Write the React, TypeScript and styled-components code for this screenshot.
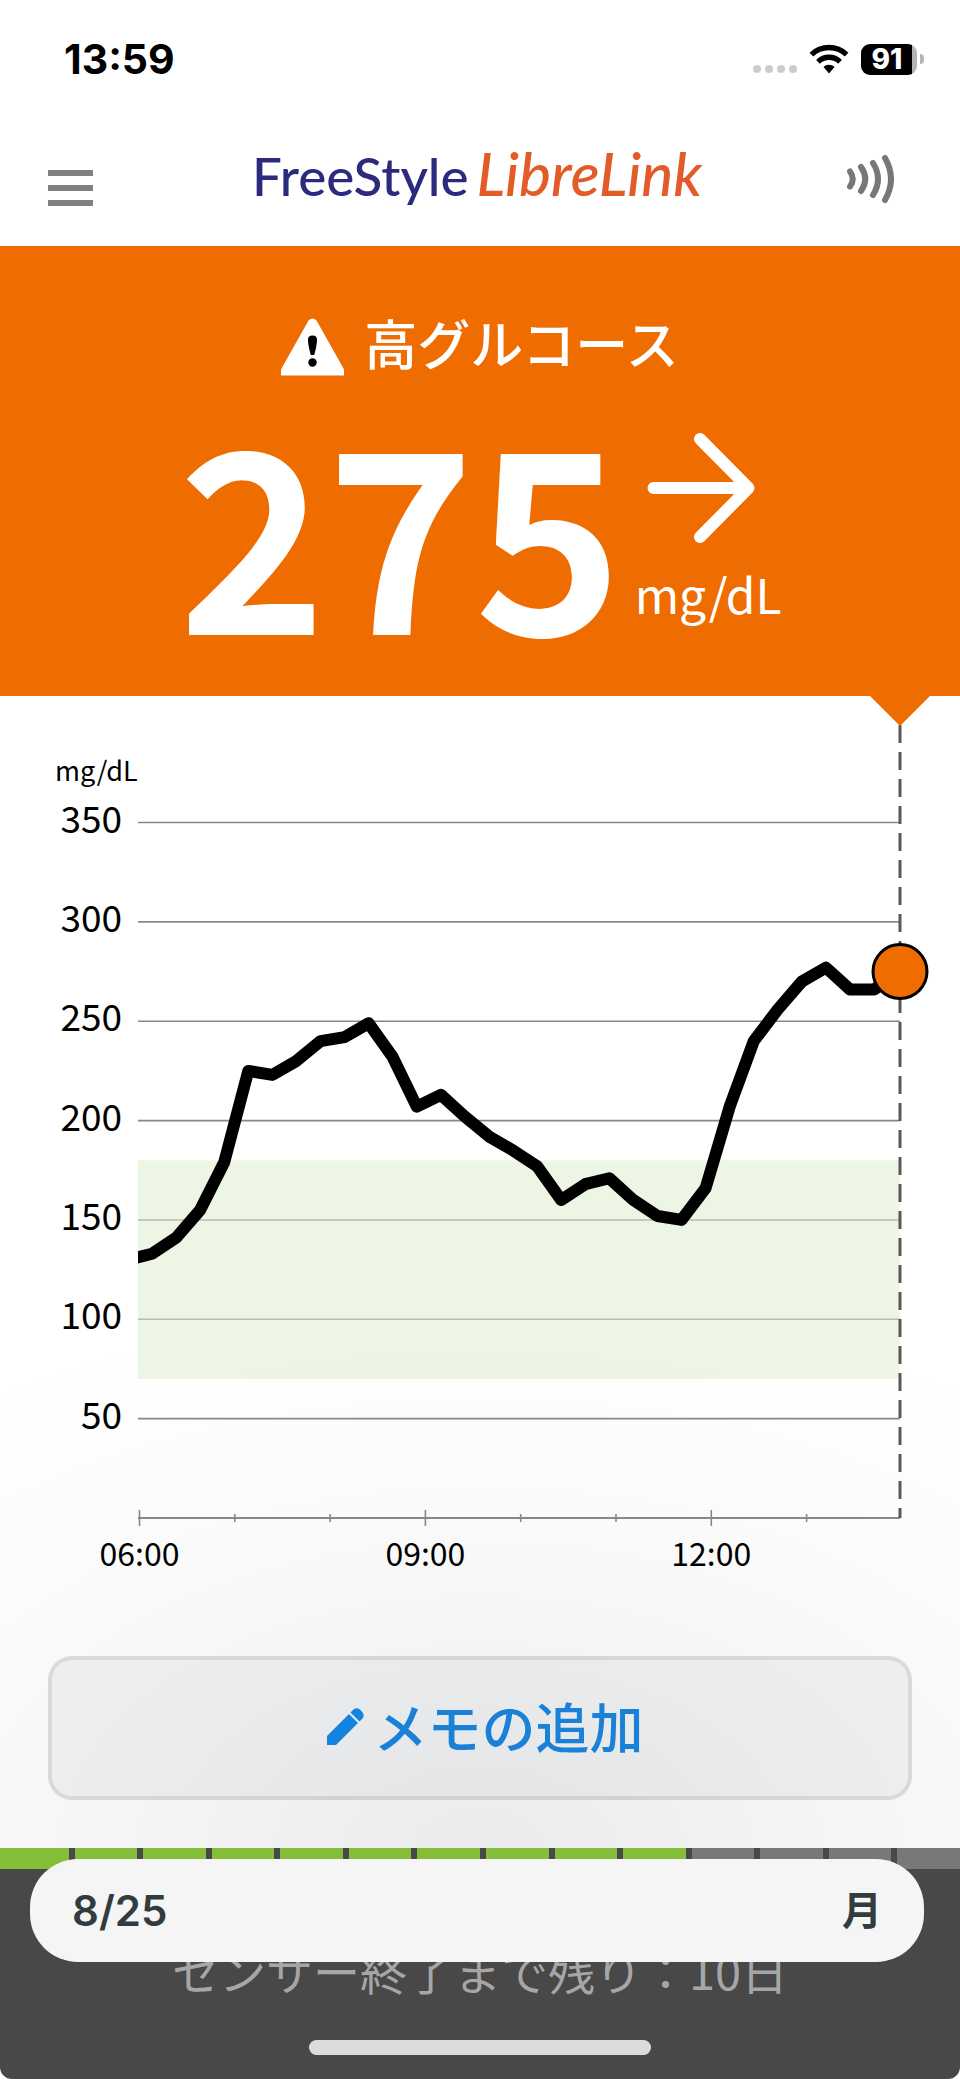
import React from "react";
import styled, { createGlobalStyle } from "styled-components";

const orange = "#ef6c00";
const cjk = '"Noto Sans CJK JP", "Noto Sans", sans-serif';
const inter = 'Inter, "Noto Sans CJK JP", sans-serif';

const GlobalStyle = createGlobalStyle`
  *, *::before, *::after { box-sizing: border-box; }
  body { margin: 0; background: #fff; color: #000; font-family: ${cjk}; }
  button { font: inherit; margin: 0; padding: 0; border: 0; background: none; cursor: pointer; }
`;

const Screen = styled.div`
  display: flex;
  flex-direction: column;
  min-height: 100vh;
`;

const StatusBar = styled.div`
  display: flex;
  align-items: center;
  justify-content: space-between;
  height: 118px;
  padding: 0 36px 0 64px;
  font-family: ${inter};
`;

const Clock = styled.time`
  font-size: 41px;
  font-weight: 700;
  line-height: 48px;
`;

const StatusIcons = styled.div`
  display: flex;
  align-items: center;
  gap: 12px;
`;

const Battery = styled.div`
  display: flex;
  align-items: center;
  gap: 3px;
`;

const BatteryBody = styled.div`
  display: flex;
  align-items: center;
  justify-content: center;
  width: 56px;
  height: 31px;
  padding-right: 4px;
  border-radius: 9px;
  background: linear-gradient(to right, #000 51px, #b4b4b4 51px);
  color: #fff;
  font-size: 28px;
  font-weight: 800;
  line-height: 31px;
`;

const BatteryTip = styled.div`
  width: 4px;
  height: 10px;
  border-radius: 0 5px 5px 0;
  background: #b4b4b4;
`;

const Header = styled.header`
  display: flex;
  align-items: center;
  justify-content: space-between;
  height: 128px;
  padding: 0 66px 0 48px;
`;

const MenuButton = styled.button`
  display: flex;
  flex-direction: column;
  gap: 9px;
  width: 45px;
  padding-top: 12px;
`;

const MenuLine = styled.span`
  height: 6px;
  background: #808080;
`;

const Logo = styled.h1`
  display: flex;
  align-items: baseline;
  gap: 8px;
  margin: 0;
  padding: 0 0 16px 16px;
  font-family: Lato, sans-serif;
  font-weight: 500;
  line-height: 72px;
`;

const LogoFree = styled.span`
  color: #2b2a7c;
  font-size: 53px;
`;

const LogoLibre = styled.span`
  color: #e35b28;
  font-size: 60px;
  font-style: italic;
`;

const ScanButton = styled.button`
  display: flex;
  padding-bottom: 6px;
`;

const Reading = styled.section`
  display: flex;
  flex-direction: column;
  align-items: center;
  gap: 50px;
  padding: 62px 48px 70px;
  background: ${orange};
  color: #fff;
`;

const AlertTitle = styled.h2`
  display: flex;
  align-items: center;
  gap: 20px;
  margin: 0;
  font-size: 53px;
  font-weight: 500;
  line-height: 60px;

  svg {
    margin-top: 10px;
  }
`;

const ReadingRow = styled.div`
  display: flex;
  justify-content: center;
  gap: 12px;
  height: 200px;
`;

const Value = styled.strong`
  font-size: 251px;
  font-weight: 700;
  line-height: 200px;
`;

const Trend = styled.div`
  display: flex;
  flex-direction: column;
  gap: 22px;
  padding-top: 7px;

  svg {
    margin-left: 12px;
  }
`;

const Unit = styled.span`
  font-size: 48px;
  line-height: 56px;
`;

const Body = styled.main`
  display: flex;
  flex: 1;
  flex-direction: column;
  background: radial-gradient(ellipse 900px 540px at 50% 100%, #ebebeb, #f6f6f6 42%, #fbfbfb 67%, #fff);
`;

const ChartSvg = styled.svg`
  display: block;
  width: 100%;
  height: auto;
  font-family: ${cjk};
`;

const NoteButton = styled.button`
  display: flex;
  align-items: center;
  justify-content: center;
  gap: 10px;
  height: 144px;
  margin: 40px 48px 48px;
  padding: 0 0 4px 10px;
  border: 4px solid rgba(0, 0, 0, 0.12);
  border-radius: 24px;
  background: rgba(200, 208, 212, 0.25);
  background-clip: padding-box;
  color: #1a80d8;
  font-size: 54px;
  font-weight: 500;
  line-height: 60px;
`;

const Footer = styled.footer`
  position: relative;
  overflow: hidden;
  border-radius: 0 0 12px 12px;
  background: #484848;
`;

const Segments = styled.div`
  display: grid;
  grid-template-columns: repeat(14, 1fr);
  height: 21px;
`;

const Segment = styled.span<{ $left: boolean }>`
  background: ${(p) => (p.$left ? "#84bd38" : "#787878")};

  & + & {
    border-left: 6px solid #484848;
  }
`;

const SensorText = styled.p`
  margin: 0;
  padding-top: 73px;
  color: #a6a6a6;
  font-size: 47px;
  font-weight: 400;
  line-height: 56px;
  text-align: center;
  white-space: nowrap;
`;

const HomeIndicator = styled.div`
  width: 342px;
  height: 15px;
  margin: 42px auto 24px;
  border-radius: 8px;
  background: #dcdcdc;
`;

const DatePill = styled.div`
  position: absolute;
  top: 11px;
  left: 30px;
  right: 36px;
  display: flex;
  align-items: center;
  justify-content: space-between;
  height: 103px;
  padding: 0 42px;
  border-radius: 48px;
  background: #f5f5f5;
  color: #323c3e;
  font-family: ${inter};
  font-size: 42px;
  font-weight: 600;
  line-height: 48px;
`;

const Weekday = styled.span`
  font-size: 40px;
`;

/* Chart geometry, in view-box units */
const LEFT = 138;
const RIGHT = 900;
const ZERO = 822;
const HOUR = 95.3;
const SIX = 139.5;
const yOf = (v: number) => ZERO - v * 1.987;

const levels = [350, 300, 250, 200, 150, 100, 50];
const hours = [0, 1, 2, 3, 4, 5, 6, 7];
const readings = [
  133, 141, 155, 179, 225, 223, 230, 240, 242, 249, 232, 207, 213, 202, 192, 185,
  177, 160, 168, 171, 160, 152, 150, 166, 207, 240, 256, 270, 277, 266, 266,
];

const curve = [
  `${LEFT - 10},${yOf(130)}`,
  ...readings.map((v, i) => `${152 + i * 24.07},${yOf(v)}`),
  `${RIGHT},${yOf(275)}`,
].join(" ");

function GlucoseChart() {
  return (
    <ChartSvg viewBox="0 0 960 920" role="img" aria-label="グルコース値のグラフ">
      <clipPath id="plot">
        <rect x={LEFT} y="0" width={RIGHT - LEFT} height={ZERO} />
      </clipPath>
      {levels.map((v) => (
        <line key={v} x1={LEFT} x2={RIGHT} y1={yOf(v)} y2={yOf(v)} stroke="#888" strokeWidth="1.6" />
      ))}
      <rect x={LEFT} y={yOf(180)} width={RIGHT - LEFT} height={yOf(70) - yOf(180)} fill="rgba(221, 236, 204, 0.53)" />
      <line x1={LEFT} x2={RIGHT} y1={ZERO} y2={ZERO} stroke="#888" strokeWidth="2" />
      {hours.map((h) => {
        const half = h % 3 === 0 ? 8 : 4;
        const x = SIX + h * HOUR;
        return <line key={h} x1={x} x2={x} y1={ZERO - half} y2={ZERO + half} stroke="#888" strokeWidth="1.6" />;
      })}
      <line x1={RIGHT} x2={RIGHT} y1="29" y2={ZERO} stroke="#595959" strokeWidth="3" strokeDasharray="18 9" />
      <polyline points={curve} fill="none" stroke="#000" strokeWidth="12" strokeLinejoin="round" clipPath="url(#plot)" />
      <circle cx={RIGHT} cy={yOf(275)} r="27" fill={orange} stroke="#000" strokeWidth="3" />
      <polygon points="870,0 930,0 900,30" fill={orange} />
      <text x="55" y="85" fontSize="27">mg/dL</text>
      {levels.map((v) => (
        <text key={v} x="122" y={yOf(v) + 10} fontSize="37" textAnchor="end">{v}</text>
      ))}
      {["06:00", "09:00", "12:00"].map((t, i) => (
        <text key={t} x={SIX + i * 3 * HOUR} y="870" fontSize="32" textAnchor="middle">{t}</text>
      ))}
    </ChartSvg>
  );
}

const SignalDots = () => (
  <svg width="44" height="31" viewBox="0 0 44 31" fill="#ccc" aria-hidden="true">
    {[4, 16, 28, 40].map((x) => <circle key={x} cx={x} cy="25" r="4" />)}
  </svg>
);

const Wifi = () => (
  <svg width="40" height="31" viewBox="0 0 40 31" aria-hidden="true">
    <g fill="none" stroke="#000" strokeWidth="5.4">
      <path d="M2.4 10.6a25.500 25.500 0 0 1 35.200 0" />
      <path d="M9 17.800a15.600 15.600 0 0 1 22 0" />
    </g>
    <path d="M20 20.800c2.100 0 4 .8 5.500 2.100L20 29.400l-5.500-6.500c1.500-1.300 3.400-2.100 5.500-2.100z" />
  </svg>
);

const Waves = () => (
  <svg width="49" height="50" viewBox="0 0 49 50" fill="none" stroke="#777" strokeWidth="6" strokeLinecap="round" aria-hidden="true">
    <path d="M5 17.500q5.500 7.500 0 15" />
    <path d="M16 13q8.500 12 0 24" />
    <path d="M28 9q10 16 0 32" />
    <path d="M40 4q12 21 0 42" />
  </svg>
);

const Warning = () => (
  <svg width="63" height="58" viewBox="0 0 63 58" aria-hidden="true">
    <path d="M27.500 2.400Q31.500-1.600 35.500 2.400L62.500 50.500Q63 51.500 63 53V57.500H0V53Q0 51.500.5 50.500z" fill="#fff" />
    <path d="M27 21.500q0-4 4.500-4t4.500 4q0 6-2.800 15.500h-3.400Q27 27.500 27 21.500z" fill="#000" />
    <circle cx="31.500" cy="44.500" r="4.200" fill="#000" />
  </svg>
);

const TrendArrow = () => (
  <svg width="108" height="110" viewBox="0 0 108 110" fill="none" stroke="#fff" strokeWidth="12" strokeLinecap="round" strokeLinejoin="round" aria-label="横ばい" role="img">
    <path d="M6.500 55H101M53 6l48.500 49L53 104" />
  </svg>
);

const Pencil = () => (
  <svg width="37" height="37" viewBox="0 0 37 37" fill="#1484e0" aria-hidden="true">
    <path d="M0 28L22 6L31 15L9 37H0z" />
    <path d="M23.500 4.500L26.500 1.500Q30-1.200 34 2.500Q38.500 7 35.500 10.500L32.500 13.500z" />
  </svg>
);

export default function App() {
  return (
    <Screen>
      <GlobalStyle />
      <StatusBar>
        <Clock>13:59</Clock>
        <StatusIcons>
          <SignalDots />
          <Wifi />
          <Battery>
            <BatteryBody>91</BatteryBody>
            <BatteryTip />
          </Battery>
        </StatusIcons>
      </StatusBar>
      <Header>
        <MenuButton type="button" aria-label="メニュー">
          <MenuLine />
          <MenuLine />
          <MenuLine />
        </MenuButton>
        <Logo>
          <LogoFree>FreeStyle</LogoFree>
          <LogoLibre>LibreLink</LogoLibre>
        </Logo>
        <ScanButton type="button" aria-label="スキャン">
          <Waves />
        </ScanButton>
      </Header>
      <Reading>
        <AlertTitle>
          <Warning />
          高グルコース
        </AlertTitle>
        <ReadingRow>
          <Value>275</Value>
          <Trend>
            <TrendArrow />
            <Unit>mg/dL</Unit>
          </Trend>
        </ReadingRow>
      </Reading>
      <Body>
        <GlucoseChart />
        <NoteButton type="button">
          <Pencil />
          メモの追加
        </NoteButton>
      </Body>
      <Footer>
        <Segments>
          {Array.from({ length: 14 }, (_, i) => <Segment key={i} $left={i < 10} />)}
        </Segments>
        <SensorText>センサー終了まで残り：10日</SensorText>
        <HomeIndicator />
        <DatePill>
          <span>8/25</span>
          <Weekday>月</Weekday>
        </DatePill>
      </Footer>
    </Screen>
  );
}
